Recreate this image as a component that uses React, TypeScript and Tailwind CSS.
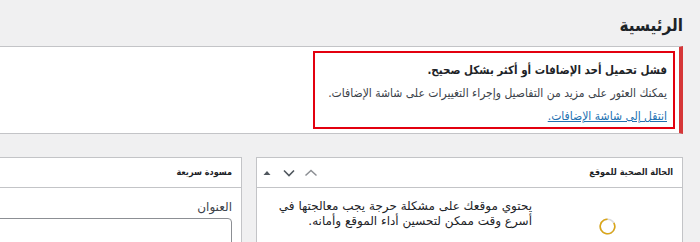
import React from "react";

const font = { fontFamily: '"DejaVu Sans", Tahoma, Arial, sans-serif' };
const cond = { fontFamily: '"DejaVu Sans Condensed", "DejaVu Sans", Tahoma, Arial, sans-serif' };

export default function App() {
  return (
    <div dir="rtl" className="w-[700px] h-[242px] overflow-hidden bg-[#f0f0f1] text-[#3c434a]" style={font}>
      <div className="mr-[17px] -ml-[40px]">
        <h1 className="pt-[10px] h-[40px] text-[17px] leading-[30px] font-bold text-[#1d2327] mb-[6px]" style={cond}>الرئيسية</h1>
        <div className="bg-white border border-[#c3c4c7] border-r-4 border-r-[#d63638] h-[88px] pt-[4px] pr-[4px]">
          <div className="w-[362px] h-[78px] border-2 border-[#e3000f] pr-[6px] pt-[7px]" style={cond}>
            <p className="text-[11.5px] font-bold text-[#1d2327] leading-[20px]">فشل تحميل أحد الإضافات أو أكثر بشكل صحيح.</p>
            <p className="text-[12px] leading-[20px] mt-[3px] whitespace-nowrap">يمكنك العثور على مزيد من التفاصيل وإجراء التغييرات على شاشة الإضافات.</p>
            <p className="text-[12px] leading-[20px] mt-[3px]">
              <a className="text-[#2271b1] underline">انتقل إلى شاشة الإضافات.</a>
            </p>
          </div>
        </div>
        <div className="flex gap-[14px] mt-[23px]">
          <div className="w-[427px] shrink-0 bg-white border border-[#c3c4c7] h-[120px]">
            <div className="h-[30px] border-b border-[#c3c4c7] flex items-center justify-between pr-[9px] pl-[3px]">
              <h2 className="text-[9px] font-bold text-[#1d2327]" style={cond}>الحالة الصحية للموقع</h2>
              <div className="flex items-center gap-[8px]">
                <svg width="14" height="14" viewBox="0 0 14 14" fill="none" stroke="#8c8f94" strokeWidth="1.5">
                  <path d="M1.5 9.5 L7 4.5 L12.5 9.5" />
                </svg>
                <svg width="14" height="14" viewBox="0 0 14 14" fill="none" stroke="#50575e" strokeWidth="1.6">
                  <path d="M2 4.5 L7 9.5 L12 4.5" />
                </svg>
                <svg width="14" height="14" viewBox="0 0 14 14" fill="#50575e">
                  <path d="M3.5 9 L7 5 L10.5 9 Z" />
                </svg>
              </div>
            </div>
            <div className="flex pt-[11px]">
              <div className="w-[150px] flex flex-col items-center pt-[19px]">
                <svg width="17" height="17" viewBox="0 0 17 17">
                  <circle cx="8.5" cy="8.5" r="7.3" fill="none" stroke="#dcdcde" strokeWidth="1.6" />
                  <circle cx="8.5" cy="8.5" r="7.3" fill="none" stroke="#dba617" strokeWidth="1.6" strokeDasharray="38 46" transform="rotate(-30 8.5 8.5)" />
                </svg>
                <span className="text-[12px] mt-[10px]">يجب تحسينه</span>
              </div>
              <div className="flex-1 pl-[12px] text-[12px] leading-[15px] text-[#1d2327]">
                <p>يحتوي موقعك على مشكلة حرجة يجب معالجتها في أسرع وقت ممكن لتحسين أداء الموقع وأمانه.</p>
                <p className="mt-[14px]">ألق نظرة على 1 عنصر في شاشة صحة الموقع.</p>
              </div>
            </div>
          </div>
          <div className="flex-1 bg-white border border-[#c3c4c7] h-[120px]">
            <div className="h-[30px] border-b border-[#c3c4c7] flex items-center pr-[9px]">
              <h2 className="text-[9px] font-bold text-[#1d2327]" style={cond}>مسودة سريعة</h2>
            </div>
            <div className="pr-[9px] pl-[10px] pt-[11px]">
              <label className="block text-[12px] leading-[16px] text-[#3c434a]">العنوان</label>
              <div className="mt-[3px] h-[30px] rounded-[4px] border border-[#8c8f94] bg-white" />
            </div>
          </div>
        </div>
      </div>
    </div>
  );
}
